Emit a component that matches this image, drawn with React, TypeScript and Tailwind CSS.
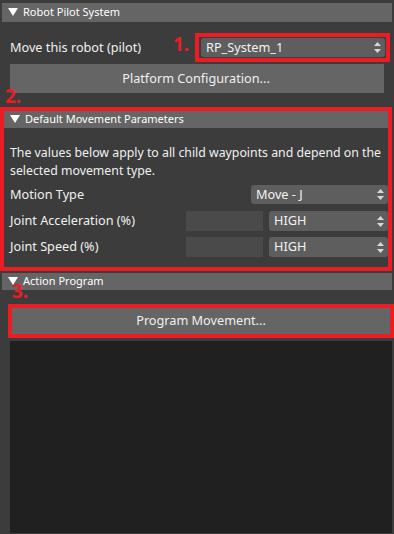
import React from "react";

const Tri = () => (
  <svg width="10" height="9" viewBox="0 0 10 9" className="shrink-0">
    <polygon points="0,0 10,0 5,8" fill="#ffffff" />
  </svg>
);

const Arrows = () => (
  <svg width="7" height="11" viewBox="0 0 7 11" className="shrink-0">
    <polygon points="3.5,0 7,4 0,4" fill="#d8d8d8" />
    <polygon points="0,7 7,7 3.5,11" fill="#d8d8d8" />
  </svg>
);

function Select({ label, className }: { label: string; className?: string }) {
  return (
    <div
      className={
        "flex items-center justify-between rounded-[3px] bg-[#5e5e5e] pl-[5px] pr-[4px] text-[12.7px] text-[#f2f2f2] " +
        (className ?? "")
      }
    >
      <span>{label}</span>
      <Arrows />
    </div>
  );
}

function Header({ title, className }: { title: string; className?: string }) {
  return (
    <div
      className={
        "flex items-center gap-[5px] bg-[#656565] pl-[6px] text-[11px] text-white " + (className ?? "")
      }
    >
      <Tri />
      <span>{title}</span>
    </div>
  );
}

export default function App() {
  return (
    <div
      className="relative flex h-[534px] w-[394px] flex-col overflow-hidden bg-[#3c3c3c] pt-[3px]"
      style={{ fontFamily: '"Noto Sans", "Open Sans", sans-serif' }}
    >
      <Header title="Robot Pilot System" className="mx-[2px] h-[19px]" />

      <div className="mt-[11px] flex h-[29px] items-center pl-[10px] pr-[4px]">
        <span className="flex-1 text-[12.7px] text-[#f0f0f0]">Move this robot (pilot)</span>
        <div className="w-[195px] border-[4px] border-[#ec1c24] p-[1px]">
          <Select label="RP_System_1" className="ml-[1px] h-[19px]" />
        </div>
      </div>

      <div className="mx-[10px] mt-[2px] flex h-[29px] items-center justify-center bg-[#656565] pr-[2px] text-[12.7px] text-[#f0f0f0]">
        Platform Configuration...
      </div>

      <div className="mt-[14px] mr-[2px] flex h-[164px] flex-col border-[4px] border-[#ec1c24]">
        <Header title="Default Movement Parameters" className="h-[17px] pl-[4px]" />
        <div className="mt-[16px] pl-[6px] text-[12.3px] leading-[18px] text-[#f0f0f0]">
          The values below apply to all child waypoints and depend on the selected movement type.
        </div>
        <div className="mt-[5px] flex h-[19px] items-center pl-[6px]">
          <span className="flex-1 text-[12.7px] text-[#f0f0f0]">Motion Type</span>
          <Select label="Move - J" className="h-[19px] w-[137px]" />
        </div>
        <div className="mt-[7px] flex h-[20px] items-center pl-[6px]">
          <span className="flex-1 text-[12.7px] text-[#f0f0f0]">Joint Acceleration (%)</span>
          <div className="h-[20px] w-[77px] bg-[#4a4a4a]" />
          <Select label="HIGH" className="ml-[6px] h-[20px] w-[119px]" />
        </div>
        <div className="mt-[6px] flex h-[20px] items-center pl-[6px]">
          <span className="flex-1 text-[12.7px] text-[#f0f0f0]">Joint Speed (%)</span>
          <div className="h-[20px] w-[77px] bg-[#4a4a4a]" />
          <Select label="HIGH" className="ml-[6px] h-[20px] w-[119px]" />
        </div>
      </div>

      <Header title="Action Program" className="mx-[2px] mt-[2px] h-[17px]" />

      <div className="ml-[8px] mt-[14px] border-[4px] border-[#ec1c24]">
        <div className="flex h-[26px] items-center justify-center bg-[#656565] text-[12.7px] text-[#f0f0f0]">
          Program Movement...
        </div>
      </div>

      <div className="mx-[2px] ml-[10px] mt-[3px] h-[192px] bg-[#202020]" />

      <span className="absolute left-[173px] top-[35px] text-[19px] font-bold leading-none text-[#ec1c24]">1.</span>
      <span className="absolute left-[5px] top-[87px] text-[19px] font-bold leading-none text-[#ec1c24]">2.</span>
      <span className="absolute left-[12px] top-[282px] text-[19px] font-bold leading-none text-[#ec1c24]">3.</span>
    </div>
  );
}
